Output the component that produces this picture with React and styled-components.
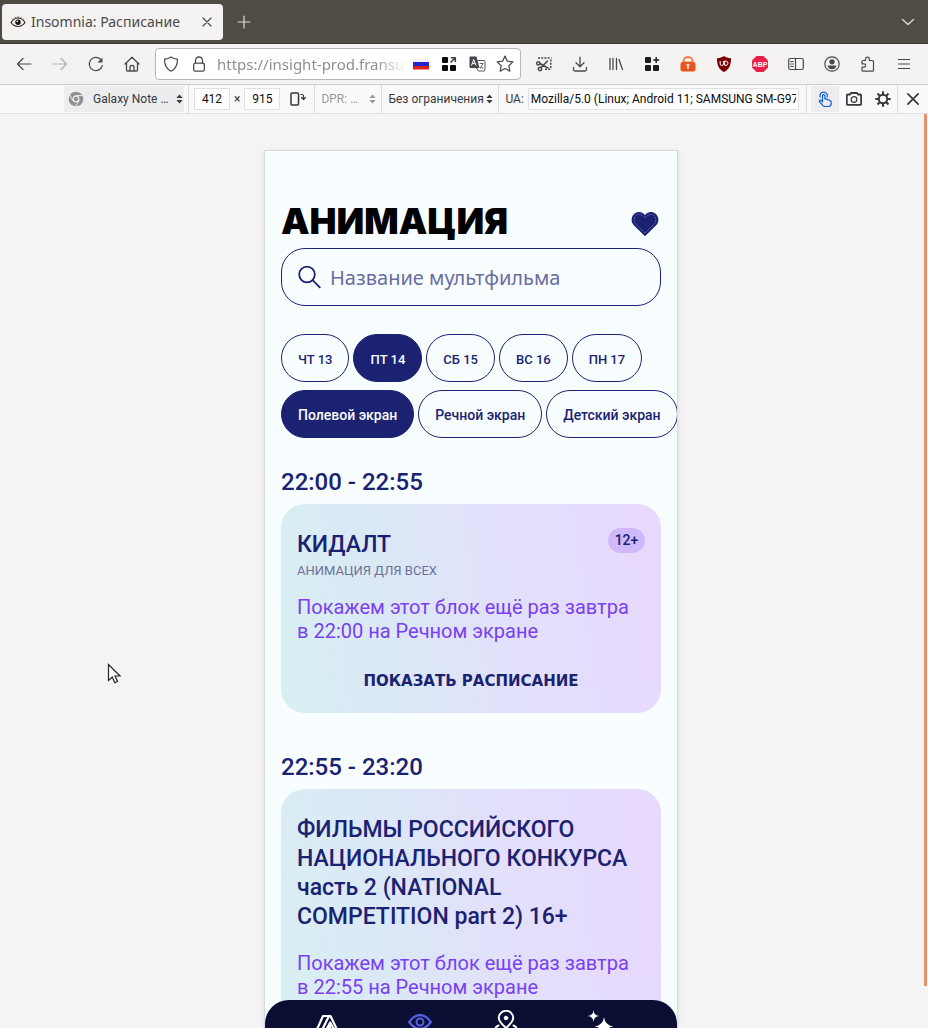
import React from 'react';
import styled, { createGlobalStyle, css } from 'styled-components';

const UI = '"Noto Sans", "Open Sans", sans-serif';
const BODY = '"Roboto", "Liberation Sans", sans-serif';
const WIDE = '"DejaVu Sans", sans-serif';
const NAVY = '#1b2272';

const GlobalStyle = createGlobalStyle`
  *, *::before, *::after { box-sizing: border-box; }
  body { margin: 0; font-family: ${UI}; background: #f4f4f4; }
  h1, h2, h3, p { margin: 0; }
  button, input, select { font: inherit; color: inherit; margin: 0; border: 0; padding: 0; background: none; }
  button { cursor: pointer; }
  svg { display: block; flex: none; }
`;

const Browser = styled.div`
  display: flex;
  flex-direction: column;
  height: 100vh;
  overflow: hidden;
`;

/* Window tab strip */
const TabStrip = styled.header`
  display: flex;
  align-items: center;
  height: 44px;
  padding: 0 6px 0 2px;
  background: #504c44;
  border-bottom: 1px solid #3b3832;
  color: #dfdcd6;
`;
const Tab = styled.div`
  display: flex;
  align-items: center;
  gap: 5px;
  width: 221px;
  height: 36px;
  padding: 0 2px 0 8px;
  border-radius: 4px;
  background: #f4f3f2;
  color: #4a4a4a;
  font-size: 14px;
`;
const TabTitle = styled.span`
  flex: 1;
  white-space: nowrap;
`;
const StripButton = styled.button`
  display: grid;
  place-items: center;
  width: 28px;
  height: 32px;
`;
const StripSpace = styled.div`
  flex: 1;
`;
const NewTab = styled(StripButton)`
  margin-left: 7px;
`;

/* Navigation toolbar */
const NavBar = styled.div`
  display: flex;
  align-items: center;
  height: 41px;
  padding: 0 6px;
  background: #f4f3f2;
  border-bottom: 1px solid #cfcecd;
  color: #4a4a4a;
`;
const ToolButton = styled.button`
  display: grid;
  place-items: center;
  width: 36px;
  height: 32px;
  opacity: ${(p) => (p.$dim ? 0.4 : 1)};
`;
const UrlBox = styled.div`
  display: flex;
  align-items: center;
  flex: 1;
  min-width: 0;
  height: 32px;
  margin: 0 5px;
  padding: 0 1px;
  border: 1px solid #b9b8b7;
  border-radius: 4px;
  background: #fff;
`;
const UrlButton = styled.button`
  display: grid;
  place-items: center;
  flex: none;
  width: 28px;
  height: 28px;
`;
const UrlInput = styled.input`
  flex: 1;
  min-width: 0;
  padding-left: 4px;
  outline: 0;
  color: #8f8f8f;
  font-size: 15px;
  mask-image: linear-gradient(to right, #000 84%, transparent 100%);
`;

/* Responsive design mode toolbar */
const DesignBar = styled.div`
  display: flex;
  align-items: center;
  height: 29px;
  padding-left: 64px;
  background: #f9f9fa;
  border-bottom: 1px solid #e0e0e2;
  color: #38383d;
  font-family: ${BODY};
  font-size: 12px;
`;
const Group = styled.div`
  display: flex;
  align-items: center;
  height: 28px;
  flex: ${(p) => (p.$grow ? '1' : 'none')};
  min-width: 0;
  padding: ${(p) => p.$pad || '0 4px 0 5px'};
  gap: ${(p) => p.$gap || '0'};
  border-right: ${(p) => (p.$last ? '0' : '1px solid #dcdcde')};
`;
const Picker = styled.label`
  display: flex;
  align-items: center;
  height: 26px;
  width: ${(p) => p.$width};
  padding: 0 1px;
  background: ${(p) => (p.$filled ? '#ededf0' : 'transparent')};
  opacity: ${(p) => (p.$dim ? 0.5 : 1)};
  select {
    flex: 1;
    min-width: 0;
    appearance: none;
    outline: 0;
    opacity: 1;
    text-overflow: ellipsis;
    white-space: nowrap;
  }
`;
const DeviceIcon = styled.span`
  padding: 0 9px 0 3px;
`;
const Field = styled.input`
  height: 22px;
  border: 1px solid #e0e0e2;
  background: #fff;
  color: #0c0c0d;
  outline: 0;
  ${(p) =>
    p.$size
      ? css`
          width: 36px;
          text-align: center;
        `
      : css`
          flex: 1;
          min-width: 0;
          padding: 0 2px;
        `}
`;
const DevButton = styled.button`
  display: grid;
  place-items: center;
  width: ${(p) => (p.$wide ? '30px' : '28px')};
  height: 26px;
  background: ${(p) => (p.$on ? '#ededf0' : 'transparent')};
  color: ${(p) => (p.$on ? '#0a5fe0' : 'inherit')};
`;

/* Page area */
const Stage = styled.main`
  position: relative;
  display: flex;
  justify-content: center;
  flex: 1;
  min-height: 0;
  padding: 36px 0 0 14px;
  background: #f4f4f4;
  overflow: hidden;
`;
const ScrollThumb = styled.div`
  position: absolute;
  top: 0;
  right: 1px;
  width: 3px;
  height: calc(100% - 42px);
  background: #e5906e;
`;
const Cursor = styled.svg`
  position: absolute;
  left: 107px;
  top: 549px;
`;
const Device = styled.div`
  position: relative;
  box-sizing: content-box;
  width: min(412px, 100%);
  height: 915px;
  flex: none;
  border: 1px solid #d9dadc;
  box-shadow: 0 2px 5px rgba(0, 0, 0, 0.1);
  background: #f8fdff;
  color: ${NAVY};
  overflow: hidden;
  font-family: ${BODY};
`;
const Page = styled.div`
  padding: 48px 16px 0;
`;
const TitleRow = styled.div`
  display: flex;
  align-items: center;
  justify-content: space-between;
  height: 49px;
  padding-right: 2px;
`;
const Title = styled.h1`
  padding-bottom: 5px;
  color: #000;
  font: 900 36px/44px Inter, sans-serif;
`;
const Search = styled.label`
  display: flex;
  align-items: center;
  gap: 8px;
  height: 58px;
  padding: 0 16px;
  border: 1px solid ${NAVY};
  border-radius: 24px;
  font-family: ${UI};
  font-size: 20px;
  input {
    flex: 1;
    min-width: 0;
    outline: 0;
  }
  input::placeholder {
    color: #696c9f;
    opacity: 1;
  }
`;
const ChipRow = styled.div`
  display: flex;
  gap: 4px;
  margin-top: ${(p) => p.$top};
  font-size: ${(p) => p.$size};
`;
const Chip = styled.button`
  flex: none;
  height: 48px;
  padding: 2px 16px 0;
  border: 1px solid ${NAVY};
  border-radius: 24px;
  background: ${(p) => (p.$on ? NAVY : 'transparent')};
  color: ${(p) => (p.$on ? '#f8fdff' : NAVY)};
  font-weight: 500;
  white-space: nowrap;
`;
const Slot = styled.section`
  padding-top: ${(p) => p.$top};
`;
const Time = styled.h2`
  font: 500 24px/28px ${BODY};
`;
const Card = styled.article`
  min-height: 209px;
  margin-top: 8px;
  padding: 24px 16px 12px;
  border-radius: 24px;
  background: linear-gradient(82deg, #d8f0f2 0%, #dbe8f6 30%, #e2e0fb 60%, #e8d8ff 100%);
`;
const TallCard = styled(Card)`
  padding-bottom: 72px;
`;
const CardHead = styled.div`
  display: flex;
  justify-content: space-between;
  align-items: flex-start;
`;
const CardTitle = styled.h3`
  padding-top: 2px;
  font: 500 23px/29px ${BODY};
`;
const Age = styled.span`
  width: 37px;
  border-radius: 13px;
  background: #cfb9fb;
  font: 500 14px/25px ${BODY};
  text-align: center;
`;
const Kind = styled.p`
  padding-top: 3px;
  color: #6d7199;
  font-size: 13px;
  line-height: 17px;
`;
const Note = styled.p`
  padding-top: ${(p) => p.$top};
  color: #7a3ff0;
  font-size: 20px;
  line-height: 24px;
`;
const ShowButton = styled.button`
  display: block;
  width: 100%;
  height: 40px;
  margin-top: 18px;
  font: 700 15px/40px ${WIDE};
`;
const BottomNav = styled.nav`
  position: absolute;
  left: 0;
  right: 0;
  bottom: 0;
  display: grid;
  grid-template-columns: 92fr 94fr 78fr 110fr;
  height: 66px;
  padding: 10px 22px 0 16px;
  border-radius: 24px 24px 0 0;
  background: #0b0e33;
`;
const NavLink = styled.a`
  display: flex;
  justify-content: center;
  color: ${(p) => (p.$on ? '#5562e6' : '#fff')};
`;

const Icon = ({ s = 16, w = 1.2, box, children }) => (
  <svg width={s} height={s} viewBox={`0 0 ${box || s} ${box || s}`} fill="none" stroke="currentColor" strokeWidth={w} strokeLinecap="round" strokeLinejoin="round" aria-hidden="true">
    {children}
  </svg>
);
const Arrows = () => (
  <svg width="7" height="10" viewBox="0 0 7 10" fill="currentColor" aria-hidden="true">
    <path d="M3.5 0.5 6.6 4H.4zM3.5 9.5.4 6h6.2z" />
  </svg>
);

const Favicon = () => (
  <Icon s={16} w={1.2}>
    <path d="M1 8.5C3 5.3 5.300 4 8 4s5 1.300 7 4.500C13 11.300 10.700 12.500 8 12.500S3 11.300 1 8.500z" stroke="#222" />
    <path d="M2.500 5 3.300 5.800M5 3.300l.5 1M8 2.500v1.300M11 3.300l-.5 1M13.500 5l-.8.8" stroke="#555" strokeWidth=".8" />
    <circle cx="8" cy="8.200" r="2.700" fill="#111" stroke="none" />
    <circle cx="7.200" cy="7.400" r=".8" fill="#fff" stroke="none" />
  </Icon>
);
const CloseIcon = ({ s = 14, w = 1.2 }) => <Icon s={s} box={14} w={w}><path d="m3 3 8 8M11 3l-8 8" /></Icon>;
const BackIcon = () => <Icon><path d="M15 8H1.500M7 2.500 1.500 8 7 13.500" /></Icon>;
const ForwardIcon = () => <Icon><path d="M1 8h13.500M9 2.500 14.500 8 9 13.500" /></Icon>;
const ReloadIcon = () => (
  <Icon>
    <path d="M14.300 9.500A6.600 6.600 0 1 1 12.500 3.300" />
    <path d="M14.500 1.500v5h-5z" fill="currentColor" stroke="none" />
  </Icon>
);
const HomeIcon = () => <Icon w={1.300}><path d="M1 8 8 1.200 15 8M2.500 7v7q0 1 1 1h9q1 0 1-1V7M6 15v-4q0-1.500 2-1.500t2 1.500v4" /></Icon>;
const ShieldIcon = () => <Icon><path d="M8 1c2 1.500 4 2 6.500 2.200C14.500 8.500 13 12.800 8 15.200 3 12.800 1.500 8.500 1.500 3.200 4 3 6 2.500 8 1z" /></Icon>;
const LockIcon = () => <Icon w={1.300}><rect x="2.700" y="7.200" width="10.600" height="8" rx="1.500" /><path d="M4.500 7V4.500a3.500 3.500 0 0 1 7 0V7" /></Icon>;
const FlagIcon = () => (
  <svg width="16" height="12" viewBox="0 0 16 12" aria-hidden="true">
    <path fill="#f2f2f2" d="M0 1h16v3.500H0z" /><path fill="#2323cf" d="M0 4h16v4H0z" /><path fill="#e01e1e" d="M0 8h16v3.500H0z" />
  </svg>
);
const GridArrow = () => (
  <svg width="16" height="16" viewBox="0 0 16 16" aria-hidden="true">
    <path fill="#0c0c0d" d="M2 1h4q1 0 1 1v4q0 1-1 1H2Q1 7 1 6V2q0-1 1-1zM2 9h4q1 0 1 1v4q0 1-1 1H2q-1 0-1-1v-4q0-1 1-1zM10 9h4q1 0 1 1v4q0 1-1 1h-4q-1 0-1-1v-4q0-1 1-1z" />
    <path d="m9.500 6.500 4.500-4.500M10 1.800h4.300V6" fill="none" stroke="#444" strokeWidth="1.600" />
  </svg>
);
const TranslateIcon = () => (
  <svg width="17" height="16" viewBox="0 0 17 16" aria-hidden="true" fill="none">
    <path d="M8.500 4.500h6.500q1 0 1 1v8.500q0 1-1 1H9.500L7.500 12" stroke="#555" />
    <path fill="#45454d" d="M1.500.5h6L10.500 12h-9q-1 0-1-1v-9.500q0-1 1-1z" />
    <path d="M2.500 9.500 4.700 3.500l2.300 6M3.300 7.600h3" stroke="#fff" />
    <path d="M10.700 7.500h3.500l-3 4.500h3.200" stroke="#555" strokeWidth=".9" />
  </svg>
);
const StarIcon = () => <Icon s={18} box={16} w={1.100}><path d="m8 1 2.100 4.500 4.900.6-3.600 3.400.9 4.900L8 12l-4.300 2.400.9-4.900L1 6.100l4.900-.6z" /></Icon>;
const SnipIcon = () => (
  <Icon w={1.500}>
    <path d="M2 2h13.500M14.800 3.500v9.500M9 13.300h6.500" strokeDasharray="2 1.200" strokeLinecap="butt" />
    <circle cx="2.300" cy="7.300" r="1.600" /><circle cx="4" cy="13" r="1.700" />
    <path d="M3.800 7.700 12 12M5 11.600 11.500 5M3.800 7.300 7 9" />
  </Icon>
);
const DownloadIcon = () => <Icon w={1.300}><path d="M8 1.200v9M4 6.700l4 4 4-4M1.500 11.500v2q0 1.500 1.500 1.500h10q1.500 0 1.500-1.500v-2" /></Icon>;
const LibraryIcon = () => <Icon w={1.300}><path d="M2 2.500v11M5 2.500v11M8.500 2.500v11M11 3.500l3.500 10" /></Icon>;
const GridPlus = () => (
  <svg width="16" height="16" viewBox="0 0 16 16" aria-hidden="true">
    <path fill="#1c1b22" d="M2 1h4q1 0 1 1v4q0 1-1 1H2Q1 7 1 6V2q0-1 1-1zM2 9h4q1 0 1 1v4q0 1-1 1H2q-1 0-1-1v-4q0-1 1-1zM10 9h4q1 0 1 1v4q0 1-1 1h-4q-1 0-1-1v-4q0-1 1-1z" />
    <path d="M12.200 1v6M9.200 4h6" stroke="#1c1b22" strokeWidth="1.500" />
  </svg>
);
const OrangeLock = () => (
  <svg width="16" height="16" viewBox="0 0 16 16" aria-hidden="true">
    <path fill="#f47a4c" d="M2.500 8V5.500a5.500 5.500 0 0 1 11 0V8z" />
    <rect x=".5" y="6" width="15" height="9.500" rx="2" fill="#e8561f" />
    <rect x="4.500" y="2.500" width="7" height="3" rx="1.500" fill="#fff" />
    <path d="M6.500 9h3M8 9v4" stroke="#fff" strokeWidth="1.300" />
  </svg>
);
const UBlock = () => (
  <svg width="16" height="16" viewBox="0 0 16 16" aria-hidden="true" fill="none">
    <path fill="#790000" d="M8 0c2 1.500 4 2 7 2.200C15 9 13.500 13 8 16 2.500 13 1 9 1 2.200 4 2 6 1.500 8 0z" />
    <path d="M4.200 5v3q0 1.500 1.500 1.500T7.500 8V5M8.700 5v4.400h1.300q2-.4 2-2.200T10 5z" stroke="#fff" strokeWidth="1" />
  </svg>
);
const AbpIcon = () => (
  <svg width="18" height="18" viewBox="0 0 18 18" aria-hidden="true">
    <path fill="#ed1e45" d="M5.500 1h7L17 5.500v7L12.500 17h-7L1 12.500v-7z" />
    <text x="9" y="12" textAnchor="middle" fill="#fff" fontFamily="Liberation Sans, sans-serif" fontWeight="700" fontSize="7">ABP</text>
  </svg>
);
const SidebarIcon = () => <Icon w={1.200}><rect x=".7" y="2.500" width="14.600" height="11" rx="1.500" /><path d="M7.500 2.500v11M2.700 5.500h2.500M2.700 8h2.500M2.700 10.500h2.500" /></Icon>;
const AccountIcon = () => (
  <Icon>
    <circle cx="8" cy="8" r="7.200" />
    <circle cx="8" cy="5.800" r="2.600" fill="currentColor" stroke="none" />
    <path d="M3.800 9.500h8.400q0 3.700-4.200 3.700T3.800 9.500z" fill="currentColor" stroke="none" />
  </Icon>
);
const PuzzleIcon = () => <Icon><path d="M5.500 4.500V3a1.900 1.900 0 0 1 3.800 0v1.500h3.200q1 0 1 1v8.700q0 1-1 1H3q-1 0-1-1v-3h2a1.700 1.700 0 0 0 0-3.400H2V5.500q0-1 1-1z" /></Icon>;
const MenuIcon = () => <Icon><path d="M2 3.500h12M2 8h12M2 12.500h12" strokeLinecap="butt" /></Icon>;
const ChromeIcon = () => (
  <Icon w={1.300}>
    <circle cx="8" cy="8" r="7.300" fill="#8f8f94" stroke="none" />
    <path d="M8 4.600h7M5 9.700 1.800 4M11 9.700 7.600 15.200" stroke="#ededf0" strokeWidth="1" />
    <circle cx="8" cy="8" r="2.800" fill="#8f8f94" stroke="#ededf0" />
  </Icon>
);
const RotateIcon = () => <Icon w={1.500}><rect x="1" y="2" width="7.500" height="12" rx="1" /><path d="M11 3.500h1q1.500 0 1.500 1.500v3M11.500 6.500l2 2 2-2" strokeWidth="1.200" /></Icon>;
const TouchIcon = () => (
  <Icon w={1.200}>
    <path d="M5.500 10V4.800a1.200 1.200 0 0 1 2.400 0V8q2.200-.4 2.600.8 2-.2 2.200.8 1.500 0 1.500 1.200v1.500q0 2.900-2.500 3.200H7.500Q6 15.200 5 13.500L2.500 10.600q-.4-1.300.8-1.400.8 0 2.200 1.600z" />
    <path d="M3.200 6A3.700 3.700 0 1 1 10.200 6" />
  </Icon>
);
const CameraIcon = () => <Icon w={1.800}><path d="M2 3.500h2l1-1.500h6l1 1.500h2q1.200 0 1.200 1.200v7.900q0 1.200-1.200 1.200H2q-1.200 0-1.200-1.200V4.700Q.8 3.500 2 3.500z" /><circle cx="8" cy="8.500" r="2.800" strokeWidth="1.200" /></Icon>;
const GearIcon = () => <Icon><circle cx="8" cy="8" r="4.200" strokeWidth="2" /><path d="M8 .3V4M8 12v3.700M.3 8H4M12 8h3.700M2.500 2.500l2.700 2.700M10.800 10.800l2.700 2.700M2.500 13.500l2.700-2.700M10.800 5.200l2.700-2.700" strokeWidth="2" strokeLinecap="butt" /></Icon>;
const HeartIcon = () => (
  <svg width="28" height="26" viewBox="0 0 28 26" aria-hidden="true">
    <path fill={NAVY} d="M14 25.300 2.600 14C-.4 10.600.1 5.400 3.400 2.800 6.800.1 11.300.7 14 4c2.700-3.300 7.200-3.900 10.600-1.200 3.300 2.600 3.800 7.800.8 11.200z" />
    <path fill="none" stroke="#8388cb" strokeWidth=".6" strokeDasharray="2 1" d="M14 22 4.500 12.600C2.500 10 2.700 6.500 5 4.600 7.700 2.500 11.500 3.300 14 7c2.500-3.700 6.300-4.500 9-2.400 2.300 1.900 2.500 5.400.5 8z" />
  </svg>
);
const SearchIcon = () => <Icon s={24} w={1.800}><circle cx="9" cy="9.500" r="7.800" /><path d="m14.800 15.300 7 7" /></Icon>;

const TentIcon = () => <Icon s={24} w={2.200}><path d="M.8 22 8 6h7.500L23.200 22M14 6 6 22M10 22l5.200-9.500 5.300 9.500M15 16v6" /></Icon>;
const EyeIcon = () => <Icon s={24} w={2.200}><path d="M1.200 12Q6 5.200 12 5.200T22.800 12Q18 18.800 12 18.800T1.200 12z" /><circle cx="12" cy="12" r="3.500" strokeWidth="2" /></Icon>;
const PinIcon = () => <Icon s={24} w={2}><path d="M12 18C7 13.500 4.800 11 4.800 8a7.200 7.200 0 0 1 14.400 0c0 3-2.200 5.500-7.200 10z" /><circle cx="12" cy="8" r="1.800" fill="currentColor" strokeWidth="1" /><path d="M4.500 15.500Q1 17 1 20M19.500 15.500Q23 17 23 20" /></Icon>;
const SparkleIcon = () => (
  <svg width="28" height="28" viewBox="0 0 28 28" fill="currentColor" aria-hidden="true">
    <path d="M7.500 0q.3 5.700 6 6-5.700.3-6 6-.3-5.700-6-6 5.700-.3 6-6zM18 7q.8 8.200 9.500 9.500Q18.800 17.800 18 26q-.8-8.200-9.500-9.500Q17.200 15.200 18 7z" />
  </svg>
);

const days = ['ЧТ 13', 'ПТ 14', 'СБ 15', 'ВС 16', 'ПН 17'];
const screens = ['Полевой экран', 'Речной экран', 'Детский экран'];
const extensions = [
  ['Снимок', SnipIcon], ['Загрузки', DownloadIcon], ['Библиотека', LibraryIcon], ['Панель закладок', GridPlus],
  ['Пароли', OrangeLock], ['uBlock', UBlock], ['Adblock Plus', AbpIcon], ['Боковая панель', SidebarIcon],
  ['Аккаунт', AccountIcon], ['Расширения', PuzzleIcon], ['Меню', MenuIcon],
];

export default function App() {
  return (
    <>
      <GlobalStyle />
      <Browser>
        <TabStrip>
          <Tab>
            <Favicon />
            <TabTitle>Insomnia: Расписание</TabTitle>
            <StripButton aria-label="Закрыть вкладку"><CloseIcon /></StripButton>
          </Tab>
          <NewTab aria-label="Новая вкладка"><Icon s={14}><path d="M7 1v12M1 7h12" /></Icon></NewTab>
          <StripSpace />
          <StripButton aria-label="Список вкладок"><Icon s={14} w={1.300}><path d="m1.500 4.500 5.500 5 5.500-5" /></Icon></StripButton>
        </TabStrip>

        <NavBar>
          <ToolButton aria-label="Назад"><BackIcon /></ToolButton>
          <ToolButton $dim aria-label="Вперёд"><ForwardIcon /></ToolButton>
          <ToolButton aria-label="Обновить"><ReloadIcon /></ToolButton>
          <ToolButton aria-label="Домой"><HomeIcon /></ToolButton>
          <UrlBox>
            <UrlButton aria-label="Защита"><ShieldIcon /></UrlButton>
            <UrlButton aria-label="Соединение"><LockIcon /></UrlButton>
            <UrlInput aria-label="Адрес" defaultValue="https://insight-prod.fransu" />
            <UrlButton aria-label="Страна"><FlagIcon /></UrlButton>
            <UrlButton aria-label="Открыть панель"><GridArrow /></UrlButton>
            <UrlButton aria-label="Перевести"><TranslateIcon /></UrlButton>
            <UrlButton aria-label="В закладки"><StarIcon /></UrlButton>
          </UrlBox>
          {extensions.map(([label, Glyph]) => (
            <ToolButton key={label} aria-label={label}><Glyph /></ToolButton>
          ))}
        </NavBar>

        <DesignBar>
          <Group $pad="0 4px 0 0">
            <Picker $width="120px" $filled>
              <DeviceIcon><ChromeIcon /></DeviceIcon>
              <select aria-label="Устройство"><option>Galaxy Note …</option></select>
              <Arrows />
            </Picker>
          </Group>
          <Group $gap="4px" $pad="0 2px 0 5px">
            <Field $size aria-label="Ширина" defaultValue="412" />
            <span>×</span>
            <Field $size aria-label="Высота" defaultValue="915" />
            <DevButton aria-label="Повернуть"><RotateIcon /></DevButton>
          </Group>
          <Group>
            <Picker $width="57px" $dim>
              <select aria-label="DPR" disabled><option>DPR: …</option></select>
              <Arrows />
            </Picker>
          </Group>
          <Group>
            <Picker $width="107px">
              <select aria-label="Сеть"><option>Без ограничения</option></select>
              <Arrows />
            </Picker>
          </Group>
          <Group $grow $gap="4px" $pad="0 7px 0 6px">
            <label htmlFor="ua">UA:</label>
            <Field id="ua" defaultValue="Mozilla/5.0 (Linux; Android 11; SAMSUNG SM-G973U)" />
          </Group>
          <Group $gap="1px" $pad="0 0 0 4px">
            <DevButton $on aria-label="Сенсор"><TouchIcon /></DevButton>
            <DevButton aria-label="Снимок экрана"><CameraIcon /></DevButton>
            <DevButton aria-label="Настройки"><GearIcon /></DevButton>
          </Group>
          <Group $last $pad="0">
            <DevButton $wide aria-label="Закрыть"><CloseIcon s={18} w={1.300} /></DevButton>
          </Group>
        </DesignBar>

        <Stage>
          <Device>
            <Page>
              <TitleRow>
                <Title>АНИМАЦИЯ</Title>
                <button aria-label="Избранное"><HeartIcon /></button>
              </TitleRow>
              <Search>
                <SearchIcon />
                <input type="text" placeholder="Название мультфильма" aria-label="Название мультфильма" />
              </Search>
              <ChipRow $top="28px" $size="13px">
                {days.map((d) => <Chip key={d} $on={d === 'ПТ 14'}>{d}</Chip>)}
              </ChipRow>
              <ChipRow $top="8px" $size="14px">
                {screens.map((s) => <Chip key={s} $on={s === 'Полевой экран'}>{s}</Chip>)}
              </ChipRow>

              <Slot $top="30px">
                <Time>22:00 - 22:55</Time>
                <Card>
                  <CardHead>
                    <CardTitle>КИДАЛТ</CardTitle>
                    <Age>12+</Age>
                  </CardHead>
                  <Kind>АНИМАЦИЯ ДЛЯ ВСЕХ</Kind>
                  <Note $top="16px">Покажем этот блок ещё раз завтра в 22:00 на Речном экране</Note>
                  <ShowButton>ПОКАЗАТЬ РАСПИСАНИЕ</ShowButton>
                </Card>
              </Slot>
              <Slot $top="40px">
                <Time>22:55 - 23:20</Time>
                <TallCard>
                  <CardTitle>ФИЛЬМЫ РОССИЙСКОГО НАЦИОНАЛЬНОГО КОНКУРСА часть 2 (NATIONAL COMPETITION part 2) 16+</CardTitle>
                  <Note $top="20px">Покажем этот блок ещё раз завтра в 22:55 на Речном экране</Note>
                </TallCard>
              </Slot>
            </Page>
            <BottomNav>
              <NavLink href="#camp" aria-label="Лагерь"><TentIcon /></NavLink>
              <NavLink href="#schedule" aria-label="Расписание" $on><EyeIcon /></NavLink>
              <NavLink href="#map" aria-label="Карта"><PinIcon /></NavLink>
              <NavLink href="#more" aria-label="Ещё"><SparkleIcon /></NavLink>
            </BottomNav>
          </Device>
          <ScrollThumb />
          <Cursor width="16" height="22" viewBox="0 0 16 22" aria-hidden="true">
            <path d="M1.500 1.500v16l3.800-3.500 2.500 5.700 2.700-1.200-2.500-5.500h5z" fill="#fff" stroke="#222" strokeWidth="1.200" />
          </Cursor>
        </Stage>
      </Browser>
    </>
  );
}
